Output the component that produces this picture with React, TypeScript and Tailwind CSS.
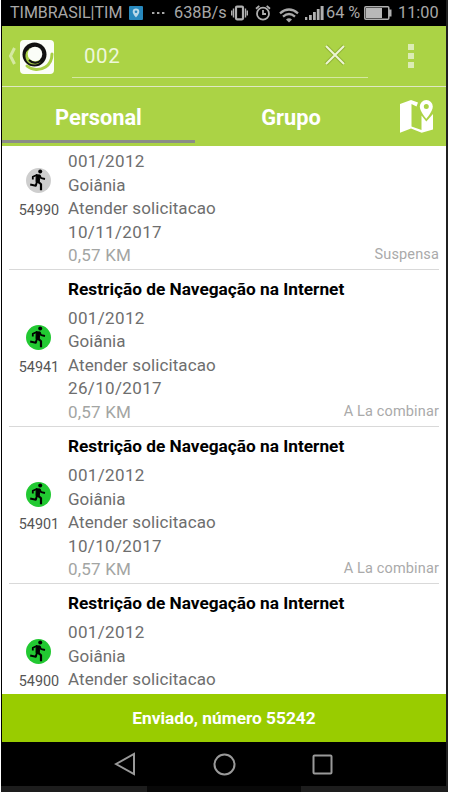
import type { ReactNode } from "react";

type Item = {
  id: string;
  date?: string;
  status?: string;
  active: boolean;
  titled: boolean;
};

const items: Item[] = [
  { id: "54990", date: "10/11/2017", status: "Suspensa", active: false, titled: false },
  { id: "54941", date: "26/10/2017", status: "A La combinar", active: true, titled: true },
  { id: "54901", date: "10/10/2017", status: "A La combinar", active: true, titled: true },
  { id: "54900", active: true, titled: true },
];

function Line({ children, className = "tracking-[0.35px] text-[#6e6e6e]" }: { children: ReactNode; className?: string }) {
  return <div className={`h-[23.5px] text-[17px] leading-[25px] ${className}`}>{children}</div>;
}

function Runner() {
  return (
    <svg className="size-[25px]" viewBox="0 0 25 25" fill="none" stroke="#000" strokeLinecap="butt" strokeLinejoin="round">
      <circle cx="14.2" cy="3.6" r="2" fill="#000" stroke="none" />
      <path d="M10.2 6.8 14.2 7l-1.200 8-3-1.200z" fill="#000" strokeWidth="1" />
      <path d="M6.800 11.500V8.800l4.500-2" strokeWidth="1.800" />
      <path d="m13.500 7.500 1.800 2.700 3.700.8" strokeWidth="1.800" />
      <path d="m11 13.500-1.200 4.200-5.600-1.200" strokeWidth="2" />
      <path d="m12 13.500 3 2.800v6" strokeWidth="2.200" />
    </svg>
  );
}

function Row({ item }: { item: Item }) {
  return (
    <li className="mx-[7px] h-[157.2px] border-b border-[#d9d9d9] first:h-[123.6px] first:pt-[3.2px] last:h-[107px] last:border-b-0">
      {item.titled && (
        <div className="h-[36.3px] pl-[59px] text-[17.25px] leading-[38px] font-bold whitespace-nowrap text-black">
          Restrição de Navegação na Internet
        </div>
      )}
      <div className="flex">
        <div className="flex w-[59px] flex-col items-center pt-[19px]">
          <div className={`size-[25px] rounded-full ${item.active ? "bg-[#22c932]" : "bg-[#cecece]"}`}>
            <Runner />
          </div>
          <div className="mt-[7px] ml-px text-[14.4px] leading-[22px] text-[#555]">{item.id}</div>
        </div>
        <div className="flex-1">
          <Line>001/2012</Line>
          <Line className="text-[#6e6e6e]">Goiânia</Line>
          <Line className="tracking-[0.1px] text-[#6e6e6e]">Atender solicitacao</Line>
          {item.date && <Line>{item.date}</Line>}
          {item.status && (
            <div className="flex items-start justify-between">
              <Line className="tracking-[0.2px] text-[#a3a5a3]">0,57 KM</Line>
              <span className="text-[14.5px] leading-[23px] tracking-[0.15px] text-[#aaa]">{item.status}</span>
            </div>
          )}
        </div>
      </div>
    </li>
  );
}

function StatusBar() {
  return (
    <div className="flex h-[26px] items-center bg-black pl-[8px] text-[16.3px] leading-[26px] whitespace-nowrap text-[#a8a8a8] *:shrink-0">
      <span className="w-[119px] text-[16px]">TIMBRASIL|TIM</span>
      <svg className="h-[14px] w-[14px]" viewBox="0 0 14 14">
        <rect width="14" height="14" rx="1" fill="#2788bd" />
        <path d="M7 2.5a3.3 3.3 0 0 0-3.3 3.3C3.7 8 7 11.5 7 11.5s3.3-3.5 3.3-5.7A3.3 3.3 0 0 0 7 2.5z" fill="#b9d9e9" />
        <circle cx="7" cy="5.8" r="1.3" fill="#2788bd" />
      </svg>
      <svg className="ml-[9px] h-[4px] w-[13px]" viewBox="0 0 13 4" fill="#a8a8a8">
        <rect y="1" width="2.4" height="2" />
        <rect x="5" y="1" width="2.4" height="2" />
        <rect x="10" y="1" width="2.4" height="2" />
      </svg>
      <span className="ml-[9px] w-[53px]">638B/s</span>
      <svg className="ml-[4px] h-[16px] w-[17px]" viewBox="0 0 17 16" fill="none" stroke="#b0b0b0">
        <rect x="5" y="1.7" width="7" height="12.6" rx="1" strokeWidth="2.2" />
        <path d="M2.5 3.5v9M14.5 3.5v9M.7 5.5v5M16.3 5.5v5" strokeWidth="1.4" />
      </svg>
      <svg className="ml-[7px] h-[16px] w-[16px]" viewBox="0 0 16 16" fill="none" stroke="#b0b0b0" strokeWidth="1.8">
        <circle cx="8" cy="8.7" r="6" />
        <path d="M8 5v4h3M1 3.7 4.3.9M15 3.7 11.7.9" />
      </svg>
      <svg className="mt-[3px] ml-[8px] h-[16px] w-[20px]" viewBox="0 0 20 16" fill="none" stroke="#a8a8a8" strokeWidth="2.3">
        <path d="M1 6.3q9-7.6 18 0M4 9.6q6-5.2 12 0" />
        <path d="M7 12.6q3-2.6 6 0l-3 2.8z" fill="#a8a8a8" stroke="none" />
      </svg>
      <svg className="ml-[6px] h-[16px] w-[19px]" viewBox="0 0 19 16" fill="#b0b0b0">
        <path d="M0 12h2.3v3H0zM4 10h2.8v5H4zM8 7h2.8v8H8zM11.8 4h2.8v11h-2.8zM15.6 1h3v14h-3z" />
      </svg>
      <span className="ml-[2px] w-[38px]">64 %</span>
      <svg className="h-[14px] w-[28px]" viewBox="0 0 28 14">
        <rect x=".8" y=".8" width="24" height="12.4" rx="1" fill="none" stroke="#b0b0b0" strokeWidth="1.5" />
        <rect x="2" y="2" width="16" height="10" fill="#b8b8b8" />
        <rect x="25" y="3.5" width="2.5" height="7" fill="#b0b0b0" />
      </svg>
      <span className="ml-[6px]">11:00</span>
    </div>
  );
}

function Toolbar() {
  return (
    <div className="flex h-[61px] items-start border-b-[1.5px] border-[#dfe8c4] bg-[#abd345]">
      <svg className="mt-[21px] ml-[5px] h-[18px] w-[10px]" viewBox="0 0 10 18" fill="none" stroke="#d5e9a2" strokeWidth="3">
        <path d="M7.5 1 3.5 9l4 8" />
      </svg>
      <div className="mt-[14px] ml-[3px] size-[34px] rounded-[4px] bg-[#fbfdf8]">
        <svg className="size-[34px]" viewBox="0 0 34 34" fill="none">
          <path d="M7 26c5 4.5 13 4.5 18.5 1 4.5-3 6.5-8 6.500-13" stroke="#a8cf45" strokeWidth="3" strokeLinecap="round" />
          <circle cx="14.5" cy="14.5" r="12" fill="#111" />
          <path d="M6.200 12C3.500 19 8 25.500 15.500 24.500c3-.5 5-2 6-4L10 8z" fill="#a8cf45" />
          <circle cx="15" cy="14" r="7.3" fill="#fbfdf8" />
          <path d="M9 20a8.300 8.300 0 0 0 13-1" stroke="#111" strokeWidth="2" />
        </svg>
      </div>
      <div className="mt-[15px] ml-[18px] flex h-[37px] w-[296px] justify-between border-b border-[#d4e8a1] pr-[22px] pl-[12px]">
        <span className="text-[20.5px] leading-[30px] tracking-[0.6px] text-[#eef7d9]">002</span>
        <svg className="mt-[3px] size-[22px]" viewBox="0 0 22 22" fill="none">
          <path d="m2 2 18 18M20 2 2 20" stroke="#91b437" strokeWidth="4" />
          <path d="m2 2 18 18M20 2 2 20" stroke="#edf5d4" strokeWidth="2" />
        </svg>
      </div>
      <div className="mt-[18px] ml-[40px] flex flex-col gap-[3px]">
        <i className="size-[6px] bg-[#dcecb4]" />
        <i className="size-[6px] bg-[#dcecb4]" />
        <i className="size-[6px] bg-[#dcecb4]" />
      </div>
    </div>
  );
}

function Tabs() {
  return (
    <div className="flex h-[59px] bg-[#abd345] text-[21.8px] leading-[62px] font-bold text-white">
      <div className="h-[56px] w-[193px] border-b-[3px] border-[#8b8d88] text-center">Personal</div>
      <div className="w-[192px] text-center">Grupo</div>
      <svg className="mt-[12px] ml-[12px] size-[36px]" viewBox="0 0 36 36">
        <path d="M1 5 12 1l7 2.5-1.5 4L12.5 5v22.5l10 3.5V16.5l4.8 6L34 15v15.5l-11.3 3.3L12 29.5 1 33.8z" fill="#fff" />
        <path d="M27.3 1a6.5 6.5 0 0 0-6.5 6.5c0 5 6.5 12.2 6.5 12.2s6.5-7.2 6.5-12.2A6.5 6.5 0 0 0 27.3 1zm0 4a2.5 2.5 0 1 1 0 5 2.5 2.5 0 0 1 0-5z" fill="#fff" />
      </svg>
    </div>
  );
}

export default function App() {
  return (
    <div className="flex h-[792px] w-[450px] flex-col overflow-hidden bg-white pr-[2px] pl-[1px] font-[Roboto,sans-serif]">
      <div className="flex h-[786px] flex-col border-r-2 border-l border-r-[#202020] border-l-black">
        <StatusBar />
        <Toolbar />
        <Tabs />
        <ul className="h-[547.5px] overflow-hidden bg-white">
          {items.map((item) => (
            <Row key={item.id} item={item} />
          ))}
        </ul>
        <div className="h-[48.5px] bg-[#99cc00] text-center text-[17.3px] leading-[49px] font-bold text-white">Enviado, número 55242</div>
        <div className="flex h-[44px] items-center bg-black">
          <svg className="ml-[112px] h-[24px] w-[22px]" viewBox="0 0 22 24" fill="none" stroke="#999" strokeWidth="2">
            <path d="M2 12 20 2v20z" />
          </svg>
          <svg className="ml-[77px] size-[23px]" viewBox="0 0 23 23" fill="none" stroke="#999" strokeWidth="2">
            <circle cx="11.5" cy="11.5" r="10" />
          </svg>
          <svg className="ml-[76px] size-[21px]" viewBox="0 0 21 21" fill="none" stroke="#999" strokeWidth="2">
            <rect x="1.5" y="1.5" width="18" height="18" rx="1" />
          </svg>
        </div>
      </div>
      <div className="flex h-[6px] bg-[#1d1d1d]">
        <div className="ml-[146px] w-[154px] bg-[#080808]" />
      </div>
    </div>
  );
}
